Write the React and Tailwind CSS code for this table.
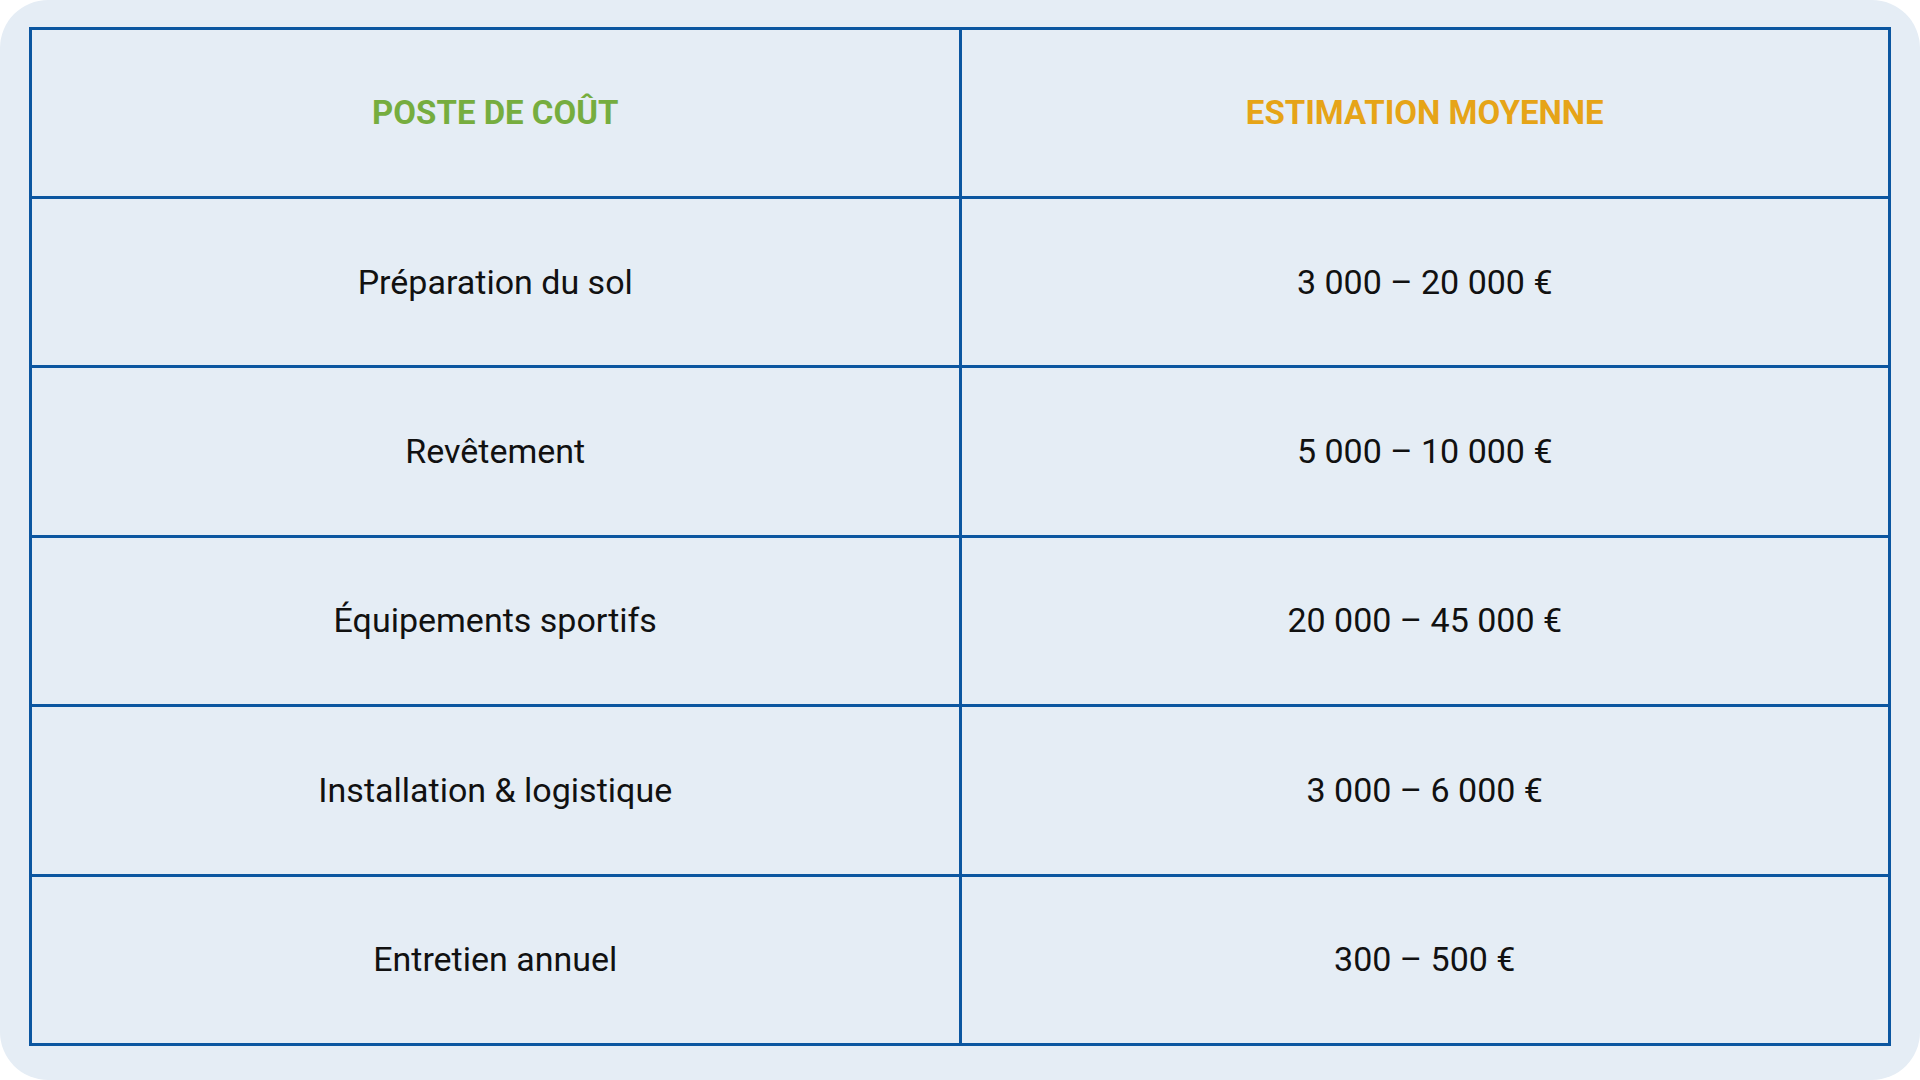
const rows = [
  ['Préparation du sol', '3 000 – 20 000 €'],
  ['Revêtement', '5 000 – 10 000 €'],
  ['Équipements sportifs', '20 000 – 45 000 €'],
  ['Installation & logistique', '3 000 – 6 000 €'],
  ['Entretien annuel', '300 – 500 €'],
];

export default function App() {
  return (
    <div className="w-[1920px] h-[1080px] bg-white">
      <div
        className="h-full rounded-[48px] bg-[#e5edf5] px-[29px] pt-[27px] pb-[34px]"
        style={{ fontFamily: 'Roboto, "Noto Sans", sans-serif' }}
      >
        <table className="w-full h-full border-collapse border-[3px] border-[#0b56a0] table-fixed">
          <thead>
            <tr className="h-[169px]">
              <th className="border-[3px] border-[#0b56a0] text-[33px] font-bold text-[#76ad3f]">
                POSTE DE COÛT
              </th>
              <th className="border-[3px] border-[#0b56a0] text-[33px] font-bold text-[#e6a417]">
                ESTIMATION MOYENNE
              </th>
            </tr>
          </thead>
          <tbody>
            {rows.map(([label, value]) => (
              <tr key={label} className="h-[150px]">
                <td className="border-[3px] border-[#0b56a0] text-center text-[34px] font-normal text-[#111]">
                  {label}
                </td>
                <td className="border-[3px] border-[#0b56a0] text-center text-[34px] font-normal text-[#111]">
                  {value}
                </td>
              </tr>
            ))}
          </tbody>
        </table>
      </div>
    </div>
  );
}
